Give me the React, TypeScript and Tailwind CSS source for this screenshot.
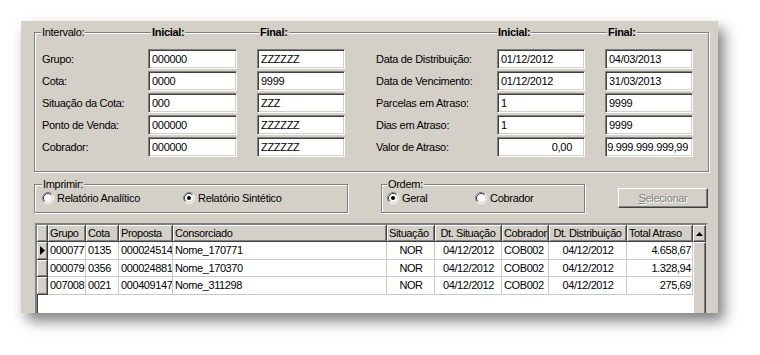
import type { ReactNode } from "react";

const bevelOut =
  "shadow-[inset_1px_1px_0_#ffffff,inset_-1px_-1px_0_#808080] border-r border-b border-[#404040]";

function Radio({ checked }: { checked?: boolean }) {
  return (
    <svg width="12" height="12" viewBox="0 0 12 12" className="shrink-0">
      <circle cx="6" cy="6" r="5" fill="#ffffff" />
      <path d="M2.11 9.89A5.5 5.5 0 0 1 9.89 2.11" fill="none" stroke="#808080" />
      <path d="M9.89 2.11A5.5 5.5 0 0 1 2.11 9.89" fill="none" stroke="#ffffff" />
      <path d="M2.82 9.18A4.5 4.5 0 0 1 9.18 2.82" fill="none" stroke="#404040" />
      <path d="M9.18 2.82A4.5 4.5 0 0 1 2.82 9.18" fill="none" stroke="#d4d0c8" />
      {checked && <circle cx="6" cy="6" r="2" fill="#000000" />}
    </svg>
  );
}

function Field({ value, className = "" }: { value: string; className?: string }) {
  return (
    <div
      className={`h-[20px] bg-white border border-t-[#808080] border-l-[#808080] border-b-white border-r-white shadow-[inset_1px_1px_0_#404040,inset_-1px_-1px_0_#d4d0c8] flex items-center leading-none whitespace-nowrap ${className}`}
    >
      {value}
    </div>
  );
}

function Legend({ children, className = "" }: { children: ReactNode; className?: string }) {
  return (
    <span className={`inline-block h-[14px] bg-[#d4d0c8] px-[1px] leading-[14px] ${className}`}>
      {children}
    </span>
  );
}

const intervalRows = [
  ["Grupo:", "000000", "ZZZZZZ", "Data de Distribuição:", "01/12/2012", "04/03/2013"],
  ["Cota:", "0000", "9999", "Data de Vencimento:", "01/12/2012", "31/03/2013"],
  ["Situação da Cota:", "000", "ZZZ", "Parcelas em Atraso:", "1", "9999"],
  ["Ponto de Venda:", "000000", "ZZZZZZ", "Dias em Atraso:", "1", "9999"],
];

const columns = [
  { title: "Grupo", w: "w-[38px]", head: "justify-start", body: "justify-start" },
  { title: "Cota", w: "w-[33px]", head: "justify-start", body: "justify-start" },
  { title: "Proposta", w: "w-[54px]", head: "justify-start", body: "justify-start" },
  { title: "Consorciado", w: "w-[214px]", head: "justify-start", body: "justify-start" },
  { title: "Situação", w: "w-[48px]", head: "justify-start", body: "justify-center" },
  { title: "Dt. Situação", w: "w-[67px]", head: "justify-center", body: "justify-center" },
  { title: "Cobrador", w: "w-[47px]", head: "justify-start", body: "justify-start" },
  { title: "Dt. Distribuição", w: "w-[78px]", head: "justify-center", body: "justify-center" },
  { title: "Total Atraso", w: "w-[66px]", head: "justify-start", body: "justify-end" },
];

const rows = [
  ["000077", "0135", "000024514", "Nome_170771", "NOR", "04/12/2012", "COB002", "04/12/2012", "4.658,67"],
  ["000079", "0356", "000024881", "Nome_170370", "NOR", "04/12/2012", "COB002", "04/12/2012", "1.328,94"],
  ["007008", "0021", "000409147", "Nome_311298", "NOR", "04/12/2012", "COB002", "04/12/2012", "275,69"],
];

export default function App() {
  return (
    <div className="w-[760px] h-[355px] bg-white overflow-hidden pl-[21px] pt-[21px] font-['Liberation_Sans',Arial,sans-serif] text-[11px] tracking-[-0.3px] text-black">
      <div className="w-[697px] h-[292px] bg-[#d4d0c8] overflow-hidden pl-[13px] pt-[11px] shadow-[6px_8px_13px_rgba(0,0,0,0.5)] flex flex-col">
        {/* Intervalo */}
        <div className="w-[675px] h-[140px] shrink-0 border border-[#808080] shadow-[inset_1px_1px_0_#ffffff,1px_1px_0_#ffffff] pl-[7px]">
          <div className="-mt-[8px] h-[14px] flex leading-[14px]">
            <div className="w-[106px]">
              <Legend className="-ml-[1px]">Intervalo:</Legend>
            </div>
            <div className="w-[109px]">
              <Legend className="ml-[3px] font-bold">Inicial:</Legend>
            </div>
            <div className="w-[119px]">
              <Legend className="ml-[2px] font-bold">Final:</Legend>
            </div>
            <div className="w-[121px]" />
            <div className="w-[108px]">
              <Legend className="font-bold">Inicial:</Legend>
            </div>
            <div>
              <Legend className="ml-[2px] font-bold">Final:</Legend>
            </div>
          </div>
          <div className="mt-[10px] flex flex-col gap-[2px]">
            {intervalRows.map((r) => (
              <div key={r[0]} className="flex items-center h-[20px]">
                <div className="w-[106px]">{r[0]}</div>
                <Field value={r[1]} className="w-[89px] pl-[3px]" />
                <Field value={r[2]} className="w-[88px] ml-[20px] pl-[3px]" />
                <div className="w-[121px] ml-[31px]">{r[3]}</div>
                <Field value={r[4]} className="w-[88px] pl-[3px]" />
                <Field value={r[5]} className="w-[88px] ml-[20px] pl-[3px]" />
              </div>
            ))}
            <div className="flex items-center h-[20px]">
              <div className="w-[106px]">Cobrador:</div>
              <Field value="000000" className="w-[89px] pl-[3px]" />
              <Field value="ZZZZZZ" className="w-[88px] ml-[20px] pl-[3px]" />
              <div className="w-[121px] ml-[31px]">Valor de Atraso:</div>
              <Field value="0,00" className="w-[88px] justify-end pr-[12px]" />
              <Field value="9.999.999.999,99" className="w-[88px] ml-[20px] justify-end pr-[4px]" />
            </div>
          </div>
        </div>

        {/* Imprimir / Ordem / Selecionar */}
        <div className="mt-[12px] flex items-start shrink-0">
          <div className="w-[314px] h-[29px] border border-[#808080] shadow-[inset_1px_1px_0_#ffffff,1px_1px_0_#ffffff]">
            <div className="-mt-[8px] h-[14px] pl-[7px] leading-[14px]">
              <Legend>Imprimir:</Legend>
            </div>
            <div className="h-[14px] flex items-center pl-[7px]">
              <div className="w-[141px] flex items-center gap-[3px]">
                <Radio />
                <span>Relatório Analítico</span>
              </div>
              <div className="flex items-center gap-[3px]">
                <Radio checked />
                <span>Relatório Sintético</span>
              </div>
            </div>
          </div>

          <div className="ml-[33px] w-[204px] h-[29px] border border-[#808080] shadow-[inset_1px_1px_0_#ffffff,1px_1px_0_#ffffff]">
            <div className="-mt-[8px] h-[14px] pl-[5px] leading-[14px]">
              <Legend>Ordem:</Legend>
            </div>
            <div className="h-[14px] flex items-center pl-[5px]">
              <div className="w-[88px] flex items-center gap-[3px]">
                <Radio checked />
                <span>Geral</span>
              </div>
              <div className="flex items-center gap-[3px]">
                <Radio />
                <span>Cobrador</span>
              </div>
            </div>
          </div>

          <div className="ml-[33px] mt-[4px] w-[90px] h-[20px] border border-t-white border-l-white border-r-[#404040] border-b-[#404040] shadow-[inset_-1px_-1px_0_#808080] flex items-center justify-center text-[#808080] [text-shadow:1px_1px_0_#ffffff]">
            <span>
              <span className="underline">S</span>elecionar
            </span>
          </div>
        </div>

        {/* Grid */}
        <div className="mt-[10px] ml-[1px] w-[673px] h-[100px] shrink-0 border-2 border-t-[#808080] border-l-[#808080] border-r-[#d4d0c8] border-b-[#d4d0c8] shadow-[inset_1px_1px_0_#404040] bg-white flex tracking-[-0.4px]">
          <div className="w-[656px] flex flex-col">
            <div className="flex h-[17px] bg-[#d4d0c8]">
              <div className={`w-[11px] h-full ${bevelOut}`} />
              {columns.map((c) => (
                <div
                  key={c.title}
                  className={`${c.w} h-full flex items-center px-[2px] whitespace-nowrap overflow-hidden ${c.head} ${bevelOut}`}
                >
                  {c.title}
                </div>
              ))}
            </div>
            {rows.map((r, i) => (
              <div key={r[0]} className="flex h-[17.5px]">
                <div className={`w-[11px] h-full bg-[#d4d0c8] flex items-center justify-center ${bevelOut}`}>
                  {i === 0 && (
                    <svg width="5" height="9" viewBox="0 0 5 9">
                      <path d="M0 0L5 4.5L0 9Z" fill="#000000" />
                    </svg>
                  )}
                </div>
                {columns.map((c, j) => (
                  <div
                    key={c.title}
                    className={`${c.w} h-full flex items-center pl-[2px] pr-[1px] whitespace-nowrap overflow-hidden border-r border-b border-[#c8c8c8] ${c.body}`}
                  >
                    {r[j]}
                  </div>
                ))}
              </div>
            ))}
          </div>
          <div className="w-[13px] flex flex-col bg-[#d4d0c8]">
            <div className="h-[17px] border border-t-white border-l-white border-r-[#404040] border-b-[#404040] shadow-[inset_-1px_-1px_0_#808080] flex items-center justify-center">
              <svg width="7" height="4" viewBox="0 0 7 4">
                <path d="M3.5 0L7 4H0Z" fill="#000000" />
              </svg>
            </div>
            <div className="flex-1 border border-t-white border-l-white border-r-[#404040] border-b-[#404040] shadow-[inset_-1px_-1px_0_#808080]" />
          </div>
        </div>
      </div>
    </div>
  );
}
